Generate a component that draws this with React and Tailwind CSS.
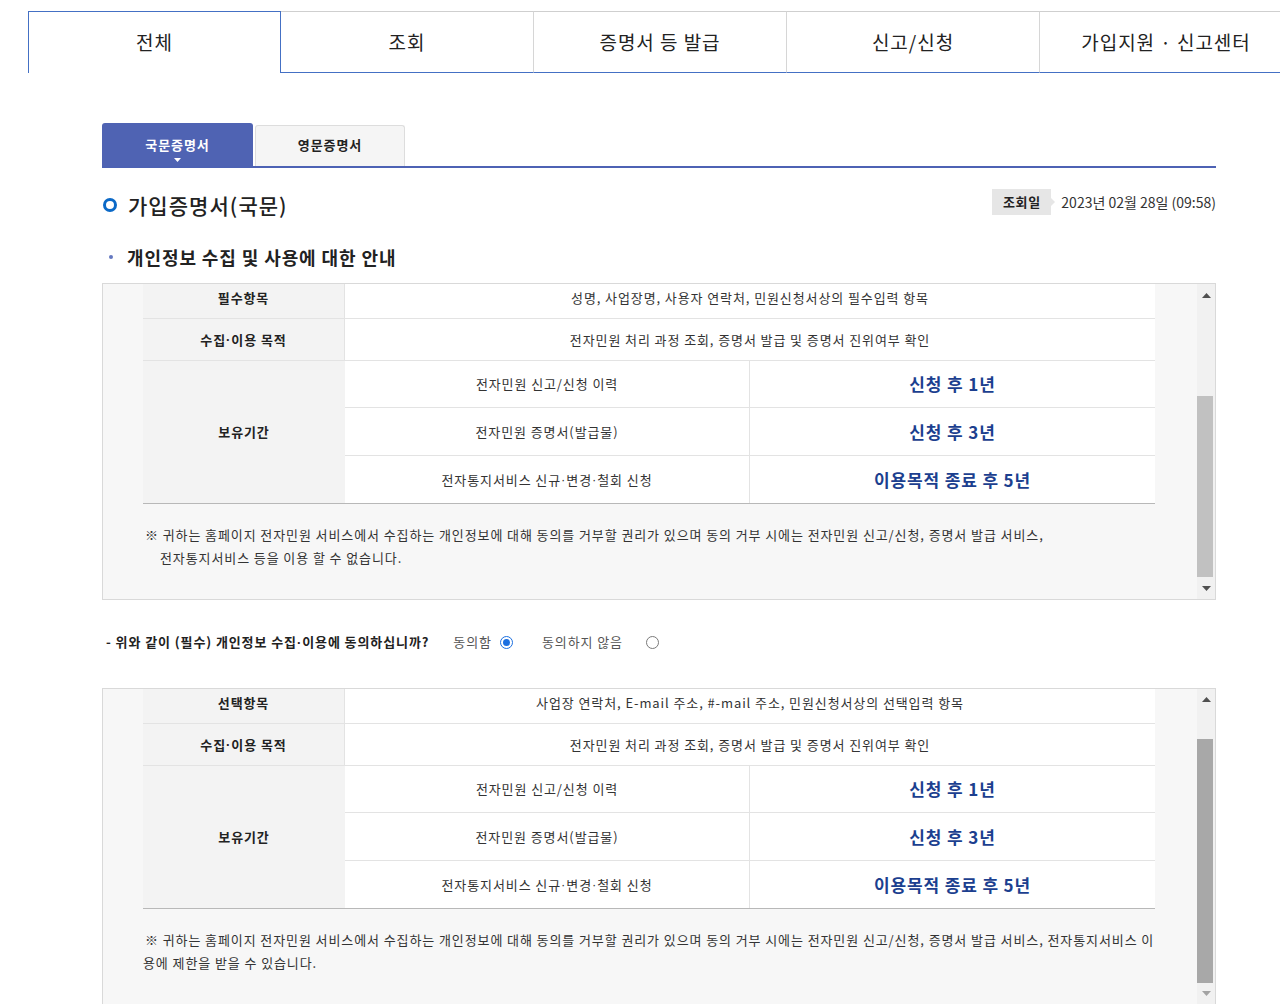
import React from "react";

const FONT = "font-['Noto_Sans_CJK_KR','Noto_Sans',sans-serif]";

function mid(text) {
  const parts = text.split("·");
  const out = [];
  parts.forEach((p, i) => {
    if (i > 0)
      out.push(
        <span key={"d" + i} className="font-['Liberation_Sans',sans-serif]">
          ·
        </span>
      );
    out.push(<React.Fragment key={"p" + i}>{p}</React.Fragment>);
  });
  return out;
}

function TopTabs() {
  const tabs = ["전체", "조회", "증명서 등 발급", "신고/신청", "가입지원 · 신고센터"];
  return (
    <div className="flex pt-[11px] pl-[28px]">
      {tabs.map((t, i) =>
        i === 0 ? (
          <div
            key={t}
            className="flex-none w-[253px] h-[62px] pb-[2px] border-t border-l border-r border-[#4470c4] flex items-center justify-center text-[19px] tracking-[0.05em] text-[#222] leading-none"
          >
            {t}
          </div>
        ) : (
          <div
            key={t}
            className="flex-none w-[253px] h-[62px] pb-[1px] border-t border-[#cfcfcf] border-b border-b-[#4470c4] border-r border-r-[#d6d6d6] flex items-center justify-center text-[19px] tracking-[0.05em] text-[#222] leading-none"
          >
            {t}
          </div>
        )
      )}
    </div>
  );
}

function SubTabs() {
  return (
    <div className="flex items-end gap-[2px] border-b-2 border-[#4d62b4] mt-[50px]">
      <div className="w-[151px] h-[43px] bg-[#4f63b3] rounded-t-[3px] flex flex-col items-center pt-[15px] text-white text-[13px] tracking-[0.07em] font-bold leading-none">
        <span>국문증명서</span>
        <svg width="7" height="4" viewBox="0 0 7 4" className="mt-[7px]">
          <path d="M0 0 H7 L3.5 4 Z" fill="#fff" />
        </svg>
      </div>
      <div className="w-[150px] h-[41px] pb-[3px] bg-[#f5f5f5] border border-b-0 border-[#dddddd] rounded-t-[3px] flex items-center justify-center text-[#222] text-[13px] tracking-[0.07em] font-bold leading-none">
        영문증명서
      </div>
    </div>
  );
}

function Scrollbar({ thumbTop, thumbHeight, thumbColor, downColor }) {
  return (
    <div className="flex-none w-[18px] bg-[#f1f1f1] flex flex-col items-center">
      <div className="h-[22px] flex items-center justify-center">
        <svg width="9" height="5" viewBox="0 0 9 5">
          <path d="M0 5 L4.5 0 L9 5 Z" fill="#505050" />
        </svg>
      </div>
      <div className="flex-1 w-full flex flex-col">
        <div style={{ height: thumbTop - 22 }} />
        <div className={`w-[16px] ${thumbColor}`} style={{ height: thumbHeight }} />
        <div className="flex-1" />
      </div>
      <div className="h-[22px] flex items-center justify-center">
        <svg width="9" height="5" viewBox="0 0 9 5">
          <path d="M0 0 L9 0 L4.5 5 Z" fill={downColor} />
        </svg>
      </div>
    </div>
  );
}

function InfoBox({ firstLabel, firstValue, note, thumbTop, thumbHeight, thumbColor, downColor }) {
  const retention = [
    ["전자민원 신고/신청 이력", "신청 후 1년", "h-[47px] border-b border-[#e3e3e3]"],
    ["전자민원 증명서(발급물)", "신청 후 3년", "h-[48px] border-b border-[#e3e3e3]"],
    ["전자통지서비스 신규·변경·철회 신청", "이용목적 종료 후 5년", "h-[47px]"],
  ];
  return (
    <div className="h-[317px] border border-[#d9d9d9] bg-[#f7f7f7] flex">
      <div className="flex-1 overflow-hidden pl-[40px]">
        <div className="w-[1012px] -mt-[7px] text-[13px] tracking-[0.9px] text-[#333]">
          <div className="flex h-[42px] border-b border-[#e3e3e3]">
            <div className="w-[202px] bg-[#f3f3f3] border-r border-[#e3e3e3] flex items-center justify-center font-bold text-[#222]">
              {firstLabel}
            </div>
            <div className="flex-1 bg-white flex items-center justify-center">{firstValue}</div>
          </div>
          <div className="flex h-[42px] border-b border-[#e3e3e3]">
            <div className="w-[202px] bg-[#f3f3f3] border-r border-[#e3e3e3] flex items-center justify-center font-bold text-[#222]">
              {mid("수집·이용 목적")}
            </div>
            <div className="flex-1 bg-white flex items-center justify-center">
              전자민원 처리 과정 조회, 증명서 발급 및 증명서 진위여부 확인
            </div>
          </div>
          <div className="flex border-b border-[#b8b8b8]">
            <div className="w-[202px] bg-[#f3f3f3] flex items-center justify-center font-bold text-[#222]">
              보유기간
            </div>
            <div className="flex-1 bg-white flex flex-col">
              {retention.map(([a, b, cls]) => (
                <div key={a} className={`flex ${cls}`}>
                  <div className="w-[405px] border-r border-[#e3e3e3] flex items-center justify-center">{mid(a)}</div>
                  <div className="flex-1 flex items-center justify-center text-[17px] tracking-[0.05em] font-bold text-[#1c3f8f]">
                    {b}
                  </div>
                </div>
              ))}
            </div>
          </div>
          <div className="pt-[19px] text-[13px] leading-[23px] text-[#333]">{note}</div>
        </div>
      </div>
      <div className="w-[42px] flex-none" />
      <Scrollbar thumbTop={thumbTop} thumbHeight={thumbHeight} thumbColor={thumbColor} downColor={downColor} />
    </div>
  );
}

function Radio({ checked }) {
  return checked ? (
    <span className="inline-flex w-[13px] h-[13px] rounded-full border border-[#1b6fe0] items-center justify-center bg-white">
      <span className="w-[7px] h-[7px] rounded-full bg-[#1b6fe0]" />
    </span>
  ) : (
    <span className="inline-block w-[13px] h-[13px] rounded-full border border-[#7a7a7a] bg-white" />
  );
}

export default function App() {
  return (
    <div className={`w-[1280px] min-h-[1004px] overflow-hidden bg-white ${FONT}`}>
      <TopTabs />
      <div className="ml-[102px] w-[1114px]">
        <SubTabs />

        <div className="mt-[21px] flex justify-between items-start">
          <div className="flex items-center h-[30px] mt-[1px]">
            <span className="w-[14px] h-[14px] rounded-full border-[3.5px] border-[#0b69c7] ml-[1px]" />
            <span className="ml-[11px] text-[21px] font-medium tracking-[0.05em] text-[#222] leading-[30px]">
              가입증명서(국문)
            </span>
          </div>
          <div className="flex items-center">
            <div className="relative h-[26px] w-[59px] bg-[#e6e6e6] flex items-center justify-center text-[13px] tracking-[0.05em] font-bold text-[#222]">
              조회일
              <span className="absolute right-[-4px] top-[9px] w-0 h-0 border-y-[4px] border-y-transparent border-l-[4px] border-l-[#e6e6e6]" />
            </div>
            <span className="ml-[10px] text-[14px] text-[#333] leading-[24px]">2023년 02월 28일 (09:58)</span>
          </div>
        </div>

        <div className="mt-[24px] flex items-center h-[26px]">
          <span className="ml-[7px] w-[4px] h-[4px] rounded-full bg-[#6478c0]" />
          <span className="ml-[14px] text-[18px] font-bold tracking-[0.05em] text-[#222] leading-[26px]">
            개인정보 수집 및 사용에 대한 안내
          </span>
        </div>

        <div className="mt-[13px]">
          <InfoBox
            firstLabel="필수항목"
            firstValue="성명, 사업장명, 사용자 연락처, 민원신청서상의 필수입력 항목"
            note={
              <>
                <div className="pl-[2px]">
                  ※ 귀하는 홈페이지 전자민원 서비스에서 수집하는 개인정보에 대해 동의를 거부할 권리가 있으며 동의 거부 시에는 전자민원 신고/신청, 증명서 발급 서비스,
                </div>
                <div className="pl-[17px]">전자통지서비스 등을 이용 할 수 없습니다.</div>
              </>
            }
            thumbTop={112}
            thumbHeight={181}
            thumbColor="bg-[#c1c1c1]"
            downColor="#505050"
          />
        </div>

        <div className="mt-[32px] flex items-center h-[20px] text-[13px] tracking-[0.9px] leading-[20px]">
          <span className="ml-[4px] font-bold text-[#222]">- 위와 같이 (필수) 개인정보 수집{mid("·")}이용에 동의하십니까?</span>
          <span className="ml-[24px] text-[#555]">동의함</span>
          <span className="ml-[8px] flex">
            <Radio checked />
          </span>
          <span className="ml-[29px] text-[#555]">동의하지 않음</span>
          <span className="ml-[23px] flex">
            <Radio />
          </span>
        </div>

        <div className="mt-[36px]">
          <InfoBox
            firstLabel="선택항목"
            firstValue="사업장 연락처, E-mail 주소, #-mail 주소, 민원신청서상의 선택입력 항목"
            note={
              <>
                <div className="pl-[2px]">
                  ※ 귀하는 홈페이지 전자민원 서비스에서 수집하는 개인정보에 대해 동의를 거부할 권리가 있으며 동의 거부 시에는 전자민원 신고/신청, 증명서 발급 서비스, 전자통지서비스 이
                </div>
                <div>용에 제한을 받을 수 있습니다.</div>
              </>
            }
            thumbTop={50}
            thumbHeight={244}
            thumbColor="bg-[#a8a8a8]"
            downColor="#a3a3a3"
          />
        </div>
      </div>
    </div>
  );
}
